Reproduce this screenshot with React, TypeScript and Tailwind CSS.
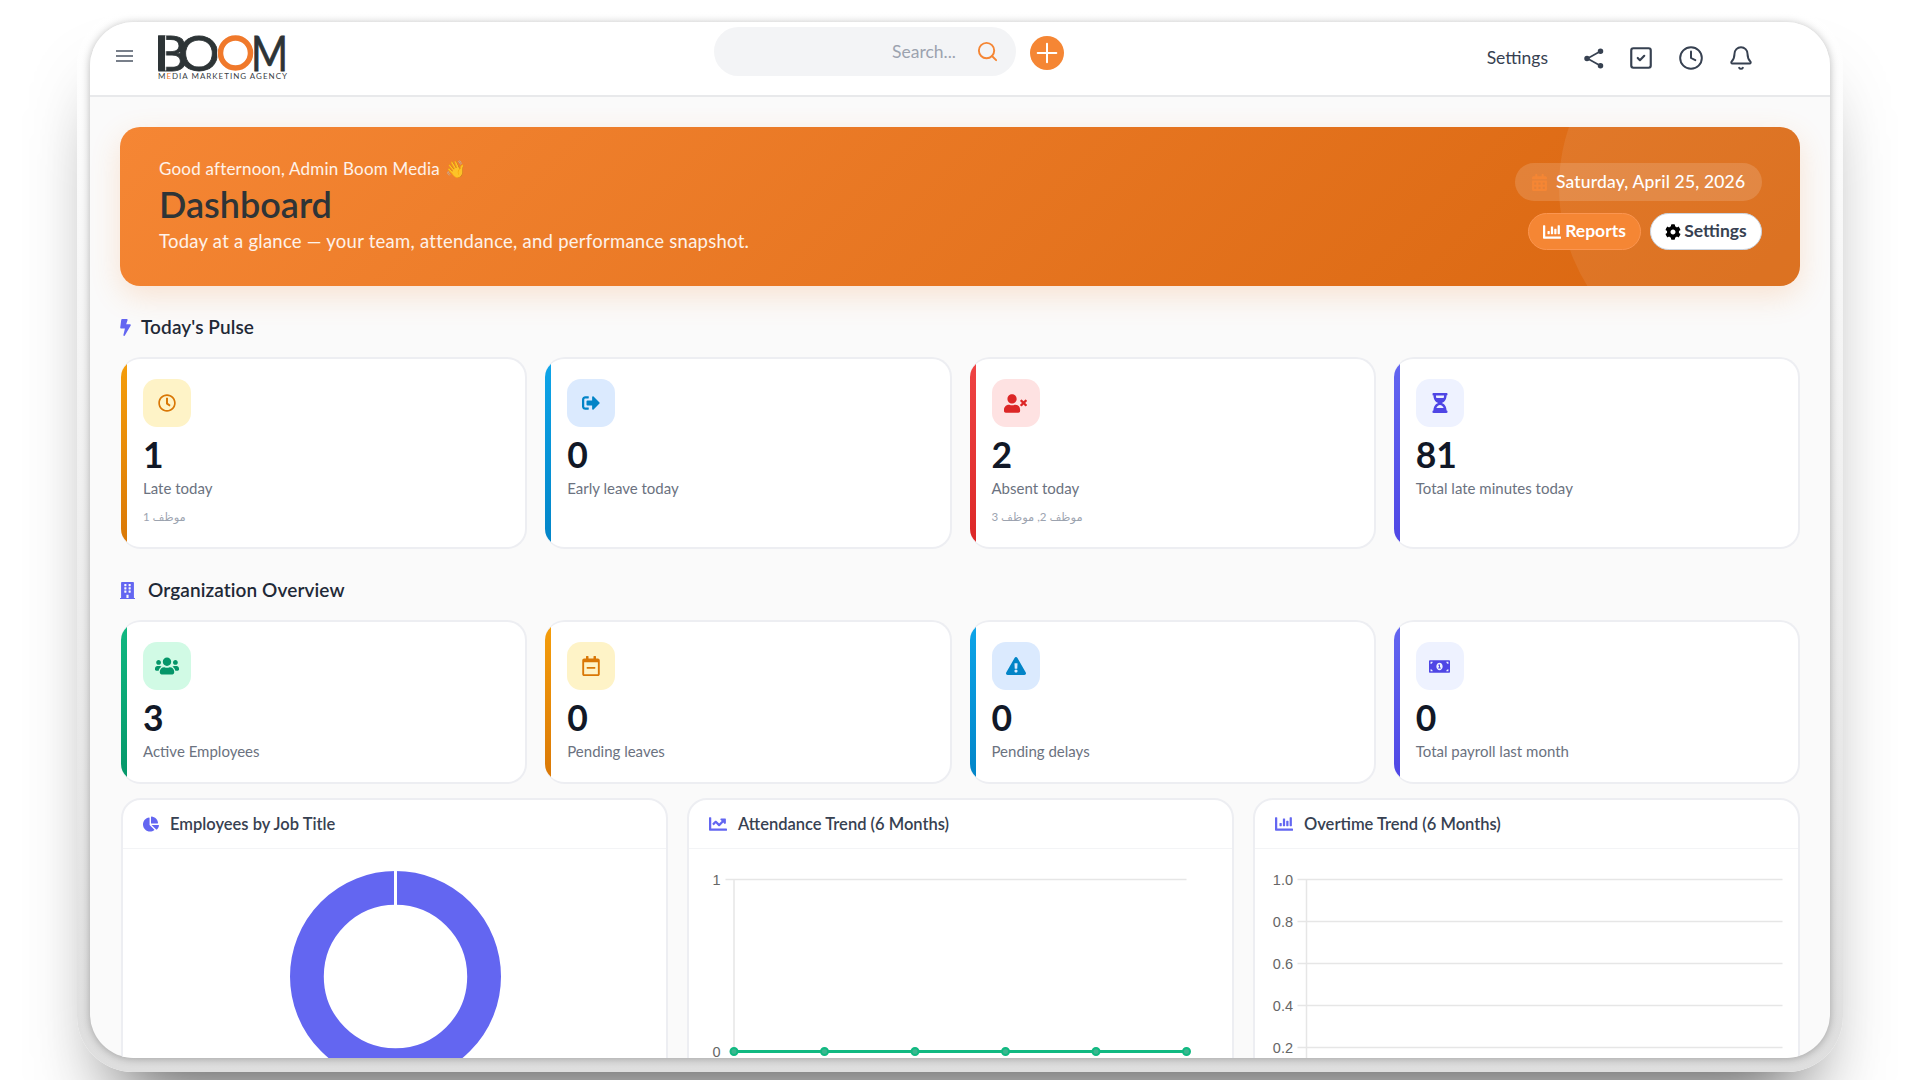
import { Bell, Clock, Plus, Search, SquareCheck } from "lucide-react";
import type { ReactNode } from "react";
import {
  FaBolt,
  FaBuilding,
  FaCalendarAlt,
  FaChartBar,
  FaChartLine,
  FaChartPie,
  FaCog,
  FaExclamationTriangle,
  FaHourglassHalf,
  FaMoneyBillAlt,
  FaRegCalendarMinus,
  FaRegClock,
  FaSignOutAlt,
  FaUsers,
  FaUserTimes,
} from "react-icons/fa";

type Stat = {
  value: string;
  label: string;
  sub?: string;
  icon: ReactNode;
  strip: string;
  box: string;
};

const pulse: Stat[] = [
  {
    value: "1",
    label: "Late today",
    sub: "موظف 1",
    icon: <FaRegClock size={18} />,
    strip: "bg-gradient-to-b from-[#f59e0b] to-[#d97706]",
    box: "bg-[#fef3c7] text-[#d97706]",
  },
  {
    value: "0",
    label: "Early leave today",
    icon: <FaSignOutAlt size={18} />,
    strip: "bg-gradient-to-b from-[#0ea5e9] to-[#0284c7]",
    box: "bg-[#dbeafe] text-[#0284c7]",
  },
  {
    value: "2",
    label: "Absent today",
    sub: "موظف 2, موظف 3",
    icon: <FaUserTimes size={23} />,
    strip: "bg-gradient-to-b from-[#ef4444] to-[#dc2626]",
    box: "bg-[#fee2e2] text-[#dc2626]",
  },
  {
    value: "81",
    label: "Total late minutes today",
    icon: <FaHourglassHalf size={20} />,
    strip: "bg-gradient-to-b from-[#6366f1] to-[#4f46e5]",
    box: "bg-[#eef2ff] text-[#4f46e5]",
  },
];

const overview: Stat[] = [
  {
    value: "3",
    label: "Active Employees",
    icon: <FaUsers size={24} />,
    strip: "bg-gradient-to-b from-[#10b981] to-[#059669]",
    box: "bg-[#d1fae5] text-[#059669]",
  },
  {
    value: "0",
    label: "Pending leaves",
    icon: <FaRegCalendarMinus size={20} />,
    strip: "bg-gradient-to-b from-[#f59e0b] to-[#d97706]",
    box: "bg-[#fef3c7] text-[#d97706]",
  },
  {
    value: "0",
    label: "Pending delays",
    icon: <FaExclamationTriangle size={20} />,
    strip: "bg-gradient-to-b from-[#0ea5e9] to-[#0284c7]",
    box: "bg-[#dbeafe] text-[#0284c7]",
  },
  {
    value: "0",
    label: "Total payroll last month",
    icon: <FaMoneyBillAlt size={21} />,
    strip: "bg-gradient-to-b from-[#6366f1] to-[#4f46e5]",
    box: "bg-[#eef2ff] text-[#4f46e5]",
  },
];

export default function App() {
  return (
    <div className="h-[1080px] w-full overflow-hidden bg-white pl-[77px] pt-[10px] font-['Lato','DejaVu_Sans',sans-serif]">
      <div className="h-[1062px] w-[1766px] rounded-[56px] bg-gradient-to-b from-white to-[#dedede] px-[13px] pb-[14px] pt-[12px] shadow-[0_55px_80px_-40px_rgba(0,0,0,0.7)]">
        <div className="flex h-full flex-col overflow-hidden rounded-[44px] bg-[#fafafa] shadow-[0_1px_8px_rgba(0,0,0,0.28)]">
          <Header />
          <main className="px-[30px] pt-[30px]">
            <Hero />
            <SectionTitle icon={<FaBolt className="mr-[10px] h-[17px] w-[11px]" />} title="Today's Pulse" />
            <StatRow items={pulse} />
            <SectionTitle icon={<FaBuilding className="mr-[13px] h-[19px] w-[15px]" />} title="Organization Overview" />
            <StatRow items={overview} />
            <div className="ml-[1px] mt-[14px] grid grid-cols-3 gap-[19px]">
              <ChartCard icon={<FaChartPie size={16} />} title="Employees by Job Title">
                <div className="flex justify-center pl-[1px] pt-[22px]">
                  <Donut />
                </div>
              </ChartCard>
              <ChartCard icon={<FaChartLine size={18} />} title="Attendance Trend (6 Months)">
                <AttendanceChart />
              </ChartCard>
              <ChartCard icon={<FaChartBar size={18} />} title="Overtime Trend (6 Months)">
                <OvertimeChart />
              </ChartCard>
            </div>
          </main>
        </div>
      </div>
    </div>
  );
}

function Header() {
  return (
    <header className="flex h-[75px] shrink-0 items-start border-b-2 border-[#e8e9eb] bg-white">
      <button type="button" className="ml-[26px] mt-[28px] text-[#4b5563]" aria-label="Menu">
        <svg width="17" height="12" viewBox="0 0 17 12" stroke="currentColor" strokeWidth="1.4">
          <line x1="0" y1="1" x2="17" y2="1" />
          <line x1="0" y1="6" x2="17" y2="6" />
          <line x1="0" y1="11" x2="17" y2="11" />
        </svg>
      </button>
      <div className="ml-[25px]">
        <Logo />
      </div>
      <div className="ml-[426px] mt-[5px] flex h-[49px] w-[302px] items-center justify-end rounded-full bg-[#f3f4f6] pr-[17px]">
        <span className="mt-[2px] text-[17.5px] text-[#9ca3af]">Search...</span>
        <Search size={23} strokeWidth={2} className="ml-[20px] text-[#f58634]" />
      </div>
      <button
        type="button"
        className="ml-[14px] mt-[14px] flex h-[34px] w-[34px] items-center justify-center rounded-full bg-[#f58634] text-white"
        aria-label="Add"
      >
        <Plus size={32} strokeWidth={1.5} />
      </button>
      <div className="ml-auto mr-[76px] mt-[23px] flex h-[26px] items-center gap-[24px] text-[#374151]">
        <span className="mr-[12px] text-[17.5px]">Settings</span>
        <ShareIcon />
        <SquareCheck size={26} strokeWidth={2} />
        <Clock size={26} strokeWidth={1.8} />
        <Bell size={26} strokeWidth={1.8} />
      </div>
    </header>
  );
}

function Logo() {
  return (
    <svg width="130" height="60" viewBox="0 0 130 60">
      <g fontFamily="'Lato', sans-serif" fontWeight="400" fontSize="48.6" fill="#2d3436" stroke="#2d3436" strokeWidth="0.8">
        <text x="-4" y="48.5" textLength="34" lengthAdjust="spacingAndGlyphs">B</text>
        <text x="20" y="48.5" textLength="42" lengthAdjust="spacingAndGlyphs">O</text>
        <text x="93" y="48.5" textLength="37" lengthAdjust="spacingAndGlyphs">M</text>
      </g>
      <rect x="0" y="13.5" width="7" height="35" fill="#2d3436" />
      <rect x="7.2" y="13.5" width="1" height="35" fill="white" />
      <circle cx="77.5" cy="31" r="15" fill="white" stroke="white" strokeWidth="7" />
      <circle cx="77.5" cy="31" r="15" fill="none" stroke="#f0792b" strokeWidth="5.5" />
      <text x="0" y="57" textLength="129" fontFamily="'Lato', sans-serif" fontWeight="400" fontSize="8" fill="#3a4145">
        M<tspan fill="#f0792b">E</tspan>DIA MARKETING AGENCY
      </text>
    </svg>
  );
}

function ShareIcon() {
  return (
    <svg width="20" height="21" viewBox="0 0 20 21" fill="currentColor" stroke="currentColor" strokeWidth="1.7">
      <line x1="16" y1="3.5" x2="3.5" y2="10.5" />
      <line x1="3.5" y1="10.5" x2="16" y2="17.5" />
      <circle cx="16.5" cy="3.2" r="1.9" />
      <circle cx="3" cy="10.5" r="1.9" />
      <circle cx="16.5" cy="17.8" r="1.9" />
    </svg>
  );
}

function Hero() {
  return (
    <section className="relative flex justify-between overflow-hidden rounded-[20px] bg-[linear-gradient(135deg,#f58634,#d9660f)] shadow-[0_10px_30px_rgba(245,134,52,0.2)]">
      <div className="absolute left-[1439px] top-[-127px] h-[374px] w-[374px] rounded-full bg-white/[0.08]" />
      <div className="relative pb-[33px] pl-[39px] pt-[30px]">
        <p className="text-[17px] leading-[24px] tracking-[0.2px] text-white/90">Good afternoon, Admin Boom Media 👋</p>
        <h1 className="mt-[1px] text-[36px] font-semibold leading-[44px] text-[#2f3437]">Dashboard</h1>
        <p className="mt-[3px] text-[18.5px] leading-[24px] tracking-[0.25px] text-white/90">
          Today at a glance — your team, attendance, and performance snapshot.
        </p>
      </div>
      <div className="relative flex flex-col items-end pr-[38px] pt-[36px]">
        <div className="flex h-[38px] w-[247px] items-center rounded-full bg-white/15 pl-[16px] text-[17.5px] font-medium tracking-[0.17px] text-white">
          <FaCalendarAlt size={17} className="text-[#f58634]" />
          <span className="ml-[8px]">Saturday, April 25, 2026</span>
        </div>
        <div className="mt-[12px] flex gap-[9px]">
          <button
            type="button"
            className="flex h-[37px] w-[113px] items-center justify-center gap-[4px] rounded-full border border-[#fb9550] bg-[#f58634] text-[17.5px] font-bold text-white"
          >
            <FaChartBar size={18} />
            Reports
          </button>
          <button
            type="button"
            className="flex h-[37px] w-[112px] items-center justify-center gap-[3px] rounded-full border border-[#cbd5e1] bg-white text-[17.5px] font-bold text-[#374151]"
          >
            <FaCog size={16} className="text-black" />
            Settings
          </button>
        </div>
      </div>
    </section>
  );
}

function SectionTitle({ icon, title }: { icon: ReactNode; title: string }) {
  return (
    <div className="mb-[18px] mt-[29px] flex h-[24px] items-center text-[#6366f1]">
      {icon}
      <h2 className="text-[19px] font-semibold leading-[24px] tracking-[0.1px] text-[#1f2937]">{title}</h2>
    </div>
  );
}

function StatRow({ items }: { items: Stat[] }) {
  return (
    <div className="ml-[1px] grid grid-cols-4 gap-[18px]">
      {items.map((item) => (
        <StatCard key={item.label} {...item} />
      ))}
    </div>
  );
}

function StatCard({ value, label, sub, icon, strip, box }: Stat) {
  return (
    <div className="flex overflow-hidden rounded-[20px] border-2 border-l-0 border-[#edeef2] bg-white">
      <div className={`w-[6px] shrink-0 ${strip}`} />
      <div className="py-[20px] pl-[16px]">
        <div className={`flex h-[48px] w-[48px] items-center justify-center rounded-[14px] ${box}`}>{icon}</div>
        <div className="mt-[6px] text-[35.5px] font-bold leading-[44px] text-[#111827]">{value}</div>
        <div className="text-[15px] leading-[22px] text-[#6b7280]">{label}</div>
        {sub && <div className="mt-[8px] text-[11.5px] leading-[20px] text-[#9ca3af]">{sub}</div>}
      </div>
    </div>
  );
}

function ChartCard({ icon, title, children }: { icon: ReactNode; title: string; children: ReactNode }) {
  return (
    <div className="h-[320px] rounded-t-[20px] border-2 border-[#edeef2] bg-white">
      <div className="flex h-[49px] items-center gap-[11px] border-b border-[#f3f4f6] pl-[20px] text-[#6366f1]">
        {icon}
        <h3 className="text-[16.5px] font-semibold text-[#374151]">{title}</h3>
      </div>
      {children}
    </div>
  );
}

function Donut() {
  return (
    <svg width="211" height="211" viewBox="0 0 211 211">
      <circle cx="105.5" cy="105.5" r="88.6" fill="none" stroke="#6366f1" strokeWidth="33.8" />
      <rect x="104" y="0" width="3" height="35" fill="white" />
    </svg>
  );
}

const GRID = "#e6e6e6";

function AttendanceChart() {
  const points = [45, 135.5, 226, 316.5, 407, 497.5];
  return (
    <svg width="543" height="220" viewBox="0 0 543 220" fontFamily="'Liberation Sans', sans-serif" fontSize="14.5" fill="#666">
      <line x1="36.5" y1="30.5" x2="497.5" y2="30.5" stroke={GRID} strokeWidth="1.5" />
      <line x1="45" y1="30" x2="45" y2="203" stroke={GRID} strokeWidth="1.5" />
      <text x="31.5" y="35.5" textAnchor="end">1</text>
      <text x="31.5" y="208" textAnchor="end">0</text>
      <line x1="45" y1="202.5" x2="497.5" y2="202.5" stroke="#10b981" strokeWidth="3" />
      {points.map((x) => (
        <circle key={x} cx={x} cy="202.5" r="3.5" fill="#3bb78f" stroke="#10b981" strokeWidth="2" />
      ))}
    </svg>
  );
}

function OvertimeChart() {
  const ticks = [
    { label: "1.0", y: 30.5 },
    { label: "0.8", y: 72.5 },
    { label: "0.6", y: 114.5 },
    { label: "0.4", y: 156.5 },
    { label: "0.2", y: 198.5 },
  ];
  return (
    <svg width="543" height="220" viewBox="0 0 543 220" fontFamily="'Liberation Sans', sans-serif" fontSize="14.5" fill="#666">
      <line x1="51.5" y1="30" x2="51.5" y2="220" stroke={GRID} strokeWidth="1.5" />
      {ticks.map((t) => (
        <g key={t.label}>
          <line x1="42.5" y1={t.y} x2="527.5" y2={t.y} stroke={GRID} strokeWidth="1.5" />
          <text x="38" y={t.y + 5} textAnchor="end">{t.label}</text>
        </g>
      ))}
    </svg>
  );
}
